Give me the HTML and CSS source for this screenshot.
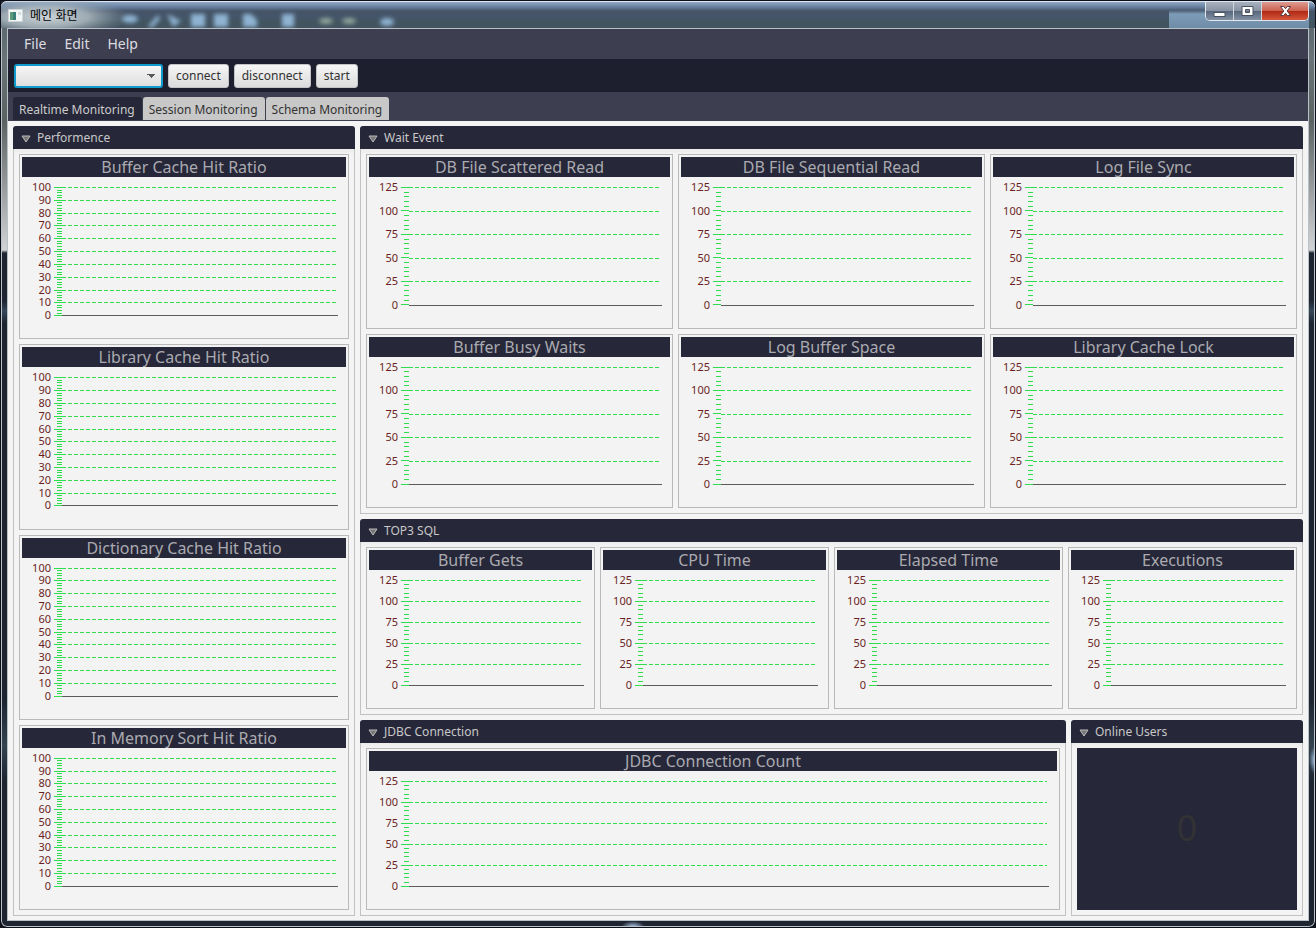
FILE: index.html
```html
<!DOCTYPE html>
<html lang="ko">
<head>
<meta charset="utf-8">
<title>메인 화면</title>
<link rel="stylesheet" href="styles.css">
</head>
<body>
<div class="window">
  <header class="titlebar">
    <svg class="titlebar-glass" width="420" height="27" aria-hidden="true">
      <defs>
        <filter id="soft" x="-50%" y="-50%" width="200%" height="200%"><feGaussianBlur stdDeviation="2"/></filter>
        <radialGradient id="glow"><stop offset="0" stop-color="#ccd4d8"/><stop offset=".5" stop-color="#b4c0c6" stop-opacity=".8"/><stop offset="1" stop-color="#8fa0ac" stop-opacity="0"/></radialGradient>
      </defs>
      <ellipse cx="45" cy="16" rx="85" ry="20" fill="url(#glow)"/>
      <g filter="url(#soft)" fill="#8fb3d3">
        <ellipse cx="129" cy="18" rx="8" ry="4"/>
        <path d="M147 25l10-11 2 4-8 9z"/>
        <path d="M166 13l14 7-8 6z"/>
        <rect x="190" y="13" width="14" height="13"/>
        <rect x="213" y="13" width="14" height="13"/>
        <path d="M242 13h8l6 6v7h-14z"/>
        <rect x="281" y="13" width="12" height="13"/>
        <ellipse cx="325" cy="20" rx="7" ry="3" fill="#90a89b"/>
        <ellipse cx="348" cy="20" rx="7" ry="3" fill="#90a89b"/>
        <ellipse cx="386" cy="21" rx="7" ry="4"/>
      </g>
    </svg>
    <svg class="app-icon" width="15" height="13" viewBox="0 0 15 13" aria-hidden="true">
      <path d="M.5.5h14v12H.5z" fill="#f4f7f7" stroke="#ccd4d6"/>
      <path d="M2 3h6v8H2z" fill="#3c7f78"/>
      <path d="M2 3h3v8H2z" fill="#5c9a7c"/>
      <path d="M10 3h3v3h-3z" fill="#d3dede"/>
    </svg>
    <h1 class="window-title">메인 화면</h1>
    <div class="window-buttons">
      <button class="window-button" type="button" aria-label="Minimize">
        <svg width="13" height="13" viewBox="0 0 13 13"><path d="M1 7.500h11v4H1z" fill="#fff" stroke="#4a5260"/></svg>
      </button>
      <button class="window-button" type="button" aria-label="Maximize">
        <svg width="13" height="13" viewBox="0 0 13 13"><path fill-rule="evenodd" d="M1 1.500h11v9H1zM4.500 4.500v3h4v-3z" fill="#fff" stroke="#4a5260"/></svg>
      </button>
      <button class="window-button window-button-close" type="button" aria-label="Close">
        <svg width="13" height="13" viewBox="0 0 13 13"><path d="M1.500 1.500h3.200l1.800 2.200 1.800-2.200h3.200L8.200 6l3.300 4.500H8.300L6.500 8.300l-1.800 2.200H1.500L4.800 6z" fill="#fff" stroke="#5c3b40"/></svg>
      </button>
    </div>
  </header>

  <div class="client">
    <nav class="menubar">
      <button class="menu" type="button">File</button>
      <button class="menu" type="button">Edit</button>
      <button class="menu" type="button">Help</button>
    </nav>

    <div class="toolbar">
      <select class="combo" aria-label="Database"><option></option></select>
      <button class="action" type="button">connect</button>
      <button class="action" type="button">disconnect</button>
      <button class="action" type="button">start</button>
    </div>

    <div class="tabs" role="tablist">
      <button class="tab tab-selected" type="button" role="tab" aria-selected="true">Realtime Monitoring</button>
      <button class="tab" type="button" role="tab" aria-selected="false">Session Monitoring</button>
      <button class="tab" type="button" role="tab" aria-selected="false">Schema Monitoring</button>
    </div>

    <main class="dashboard">
      <section class="panel">
        <button class="panel-header" type="button"><svg class="arrow" width="10" height="8" viewBox="0 0 10 8"><path d="M1 1h8L5 7z"/></svg>Performence</button>
        <div class="panel-body performance-grid">
          <figure class="chart" data-max="100" data-step="10"><figcaption>Buffer Cache Hit Ratio</figcaption></figure>
          <figure class="chart" data-max="100" data-step="10"><figcaption>Library Cache Hit Ratio</figcaption></figure>
          <figure class="chart" data-max="100" data-step="10"><figcaption>Dictionary Cache Hit Ratio</figcaption></figure>
          <figure class="chart" data-max="100" data-step="10"><figcaption>In Memory Sort Hit Ratio</figcaption></figure>
        </div>
      </section>

      <div class="right-column">
        <section class="panel">
          <button class="panel-header" type="button"><svg class="arrow" width="10" height="8" viewBox="0 0 10 8"><path d="M1 1h8L5 7z"/></svg>Wait Event</button>
          <div class="panel-body wait-grid">
            <figure class="chart" data-max="125" data-step="25"><figcaption>DB File Scattered Read</figcaption></figure>
            <figure class="chart" data-max="125" data-step="25"><figcaption>DB File Sequential Read</figcaption></figure>
            <figure class="chart" data-max="125" data-step="25"><figcaption>Log File Sync</figcaption></figure>
            <figure class="chart" data-max="125" data-step="25"><figcaption>Buffer Busy Waits</figcaption></figure>
            <figure class="chart" data-max="125" data-step="25"><figcaption>Log Buffer Space</figcaption></figure>
            <figure class="chart" data-max="125" data-step="25"><figcaption>Library Cache Lock</figcaption></figure>
          </div>
        </section>

        <section class="panel">
          <button class="panel-header" type="button"><svg class="arrow" width="10" height="8" viewBox="0 0 10 8"><path d="M1 1h8L5 7z"/></svg>TOP3 SQL</button>
          <div class="panel-body sql-grid">
            <figure class="chart" data-max="125" data-step="25"><figcaption>Buffer Gets</figcaption></figure>
            <figure class="chart" data-max="125" data-step="25"><figcaption>CPU Time</figcaption></figure>
            <figure class="chart" data-max="125" data-step="25"><figcaption>Elapsed Time</figcaption></figure>
            <figure class="chart" data-max="125" data-step="25"><figcaption>Executions</figcaption></figure>
          </div>
        </section>

        <div class="bottom-row">
          <section class="panel">
            <button class="panel-header" type="button"><svg class="arrow" width="10" height="8" viewBox="0 0 10 8"><path d="M1 1h8L5 7z"/></svg>JDBC Connection</button>
            <div class="panel-body">
              <figure class="chart" data-max="125" data-step="25"><figcaption>JDBC Connection Count</figcaption></figure>
            </div>
          </section>
          <section class="panel">
            <button class="panel-header" type="button"><svg class="arrow" width="10" height="8" viewBox="0 0 10 8"><path d="M1 1h8L5 7z"/></svg>Online Users</button>
            <div class="panel-body">
              <output class="user-count">0</output>
            </div>
          </section>
        </div>
      </div>
    </main>
  </div>
</div>
<script src="charts.js"></script>
</body>
</html>
```
FILE: styles.css
```css
* { box-sizing: border-box; }

body {
  margin: 0;
  background: #10131c;
  font-family: "Noto Sans", "Noto Sans CJK KR", sans-serif;
  font-size: 12px;
}

button, select { font: inherit; margin: 0; }

/* Window frame */
.window {
  display: flex;
  flex-direction: column;
  height: 100vh;
  min-height: 640px;
  padding: 0 6px 6px;
  border: 1px solid #0c0f18;
  border-radius: 7px;
  box-shadow: inset 0 0 0 1px #b9c4cc;
  background:
    radial-gradient(12px 6px at 632px 100%, #b4cdf0, transparent) no-repeat,
    radial-gradient(6px 14px at 100% 759px, #a9c8ee, transparent) no-repeat,
    linear-gradient(#536069 0, #6a7478 60px, #5b6261 120px, #a5a7a8 200px, #d2d3d4 249px, #1e2531 252px, #1e2531 300px, #35475a 310px, #1e2531 322px, #1e2531 700px, #34434f 745px, #1e2531 780px);
}

.titlebar {
  position: relative;
  display: flex;
  align-items: center;
  flex: none;
  height: 27px;
  margin: 0 -6px;
  padding-left: 7px;
  border-top: 1px solid #dce8f4;
  border-radius: 6px 6px 0 0;
  background:
    linear-gradient(transparent 8px, #7d9cb8 12px, #6f8ca6) right 6px top / 140px 100% no-repeat,
    linear-gradient(#93a7c2 0, #65809f 5px, #465468 9px, #445568 16px, #40555f 20px, #465260 27px);
}

.titlebar-glass { position: absolute; left: 0; top: -1px; }
.app-icon { position: relative; }

.window-title {
  position: relative;
  margin: 0 auto 0 7px;
  font: 12px/18px "Noto Sans CJK KR", sans-serif;
  color: #000;
}

.window-buttons {
  display: flex;
  align-self: flex-start;
  margin-right: 6px;
  border: 1px solid #e1e6eb;
  border-top: 0;
  border-radius: 0 0 5px 5px;
  overflow: hidden;
}

.window-button {
  display: grid;
  place-items: center;
  width: 28px;
  height: 18px;
  padding: 0;
  border: 0;
  border-right: 1px solid #d0d6dc;
  background: linear-gradient(#a9b2bf, #8893a3 48%, #56657a 50%, #8291a4);
}

.window-button-close {
  width: 46px;
  border-right: 0;
  background: linear-gradient(#dd9c90, #cc6252 48%, #b02713 50%, #d4573c);
}

.client {
  display: flex;
  flex-direction: column;
  flex: 1;
  min-height: 0;
  border: 1px solid #b7c1c8;
  background: #f4f4f5;
}

/* Menu, toolbar and tabs */
.menubar {
  display: flex;
  flex: none;
  height: 30px;
  padding-left: 7px;
  background: #3d3f50;
}

.menu {
  padding: 0 9px 2px;
  border: 0;
  background: none;
  font-size: 14px;
  color: #dcdce0;
}

.toolbar {
  display: flex;
  align-items: center;
  flex: none;
  gap: 5px;
  height: 33px;
  padding-left: 6px;
  background: #1e1f2e;
}

.combo {
  width: 149px;
  height: 24px;
  padding: 0 8px;
  appearance: none;
  border: 2px solid #0f9bcb;
  border-radius: 3px;
  background: conic-gradient(from -45deg at 50% 100%, #5a5a5a 90deg, transparent 0) right 6px center / 8px 4px no-repeat, linear-gradient(#f6f6f6, #dedede);
}

.action {
  height: 24px;
  padding: 0 7px;
  border: 1px solid #c4c4c6;
  border-radius: 3px;
  background: linear-gradient(#f6f6f6, #dcdcdc);
  color: #333;
}

.tabs {
  display: flex;
  align-items: flex-end;
  flex: none;
  gap: 1px;
  height: 29px;
  padding: 0 0 1px 5px;
  background: #3d3f50;
}

.tab {
  height: 23px;
  padding: 2px 7px 0 6px;
  border: 0;
  border-radius: 3px 3px 0 0;
  background: #c8c8c8;
  color: #333;
}

.tab-selected {
  background: #262738;
  color: #ccc;
}

/* Panels */
.dashboard {
  display: grid;
  grid-template-columns: minmax(0, 342fr) minmax(0, 943fr);
  gap: 5px;
  flex: 1;
  min-height: 0;
  padding: 5px 5px 4px;
}

.right-column {
  display: grid;
  grid-template-rows: minmax(0, 388fr) minmax(0, 196fr) minmax(0, 196fr);
  gap: 5px;
  min-height: 0;
}

.bottom-row {
  display: grid;
  grid-template-columns: minmax(0, 706fr) minmax(0, 232fr);
  gap: 5px;
}

.panel {
  display: flex;
  flex-direction: column;
  min-width: 0;
  min-height: 0;
}

.panel-header {
  display: flex;
  align-items: center;
  flex: none;
  gap: 6px;
  height: 23px;
  padding: 0 8px;
  border: 0;
  border-radius: 3px 3px 0 0;
  background: #262738;
  color: #c8c8c8;
}

.arrow { margin-top: 2px; fill: #777; stroke: #bbb; }

.panel-body {
  display: grid;
  gap: 5px;
  flex: 1;
  min-height: 0;
  padding: 5px;
  border: 1px solid #c2c2c2;
  border-top: 0;
  background: linear-gradient(#ececec, #f4f4f4 6px);
}

.performance-grid { grid-template-rows: repeat(4, minmax(0, 1fr)); }
.wait-grid { grid-template: repeat(2, minmax(0, 1fr)) / repeat(3, minmax(0, 1fr)); }
.sql-grid { grid-template-columns: repeat(4, minmax(0, 1fr)); }

/* Charts */
.chart {
  display: flex;
  flex-direction: column;
  min-width: 0;
  min-height: 0;
  margin: 0;
  padding: 2px;
  border: 1px solid #b9b9b9;
  background: #f3f3f3;
}

.chart figcaption {
  flex: none;
  height: 20px;
  background: #262738;
  color: #aaaab0;
  font-size: 16px;
  line-height: 20px;
  text-align: center;
  white-space: nowrap;
}

.plot {
  display: grid;
  grid-template: minmax(0, 1fr) / 29px 3px 8px minmax(0, 1fr);
  flex: 1 1 0;
  min-height: 0;
  padding: 10px 8px 20px 0;
}

.scale, .ticks, .lines {
  display: flex;
  flex-direction: column;
  justify-content: space-between;
  min-height: 0;
}

.scale {
  margin: -6px 0 -5px;
  color: #6b1f1f;
  font-size: 11px;
  line-height: 12px;
  text-align: right;
}

.ticks {
  grid-column: 3;
  align-items: flex-end;
}

.tick {
  width: 5px;
  height: 1px;
  background: #2fdc4c;
}

.tick-major { width: 8px; }

.grid-line {
  height: 1px;
  margin-right: 2px;
  background: repeating-linear-gradient(90deg, #2fdc4c 0 4px, transparent 4px 6px);
}

.base-line {
  height: 1px;
  background: #5c5c5c;
}

.user-count {
  display: grid;
  place-items: center;
  padding-bottom: 4px;
  background: #262738;
  color: #323235;
  font-size: 36px;
}
```
FILE: charts.js
```js
const MINOR_TICKS = 5;

function box(className, parent) {
  const element = document.createElement("div");
  element.className = className;
  parent.append(element);
  return element;
}

document.querySelectorAll(".chart").forEach((chart) => {
  const max = Number(chart.dataset.max);
  const step = Number(chart.dataset.step);
  const plot = box("plot", chart);
  const scale = box("scale", plot);
  const ticks = box("ticks", plot);
  const lines = box("lines", plot);

  for (let value = max; value >= 0; value -= step) {
    box("label", scale).textContent = value;
    box("tick tick-major", ticks);
    box(value > 0 ? "grid-line" : "base-line", lines);
    for (let i = 1; value > 0 && i < MINOR_TICKS; i++) box("tick", ticks);
  }
});
```
